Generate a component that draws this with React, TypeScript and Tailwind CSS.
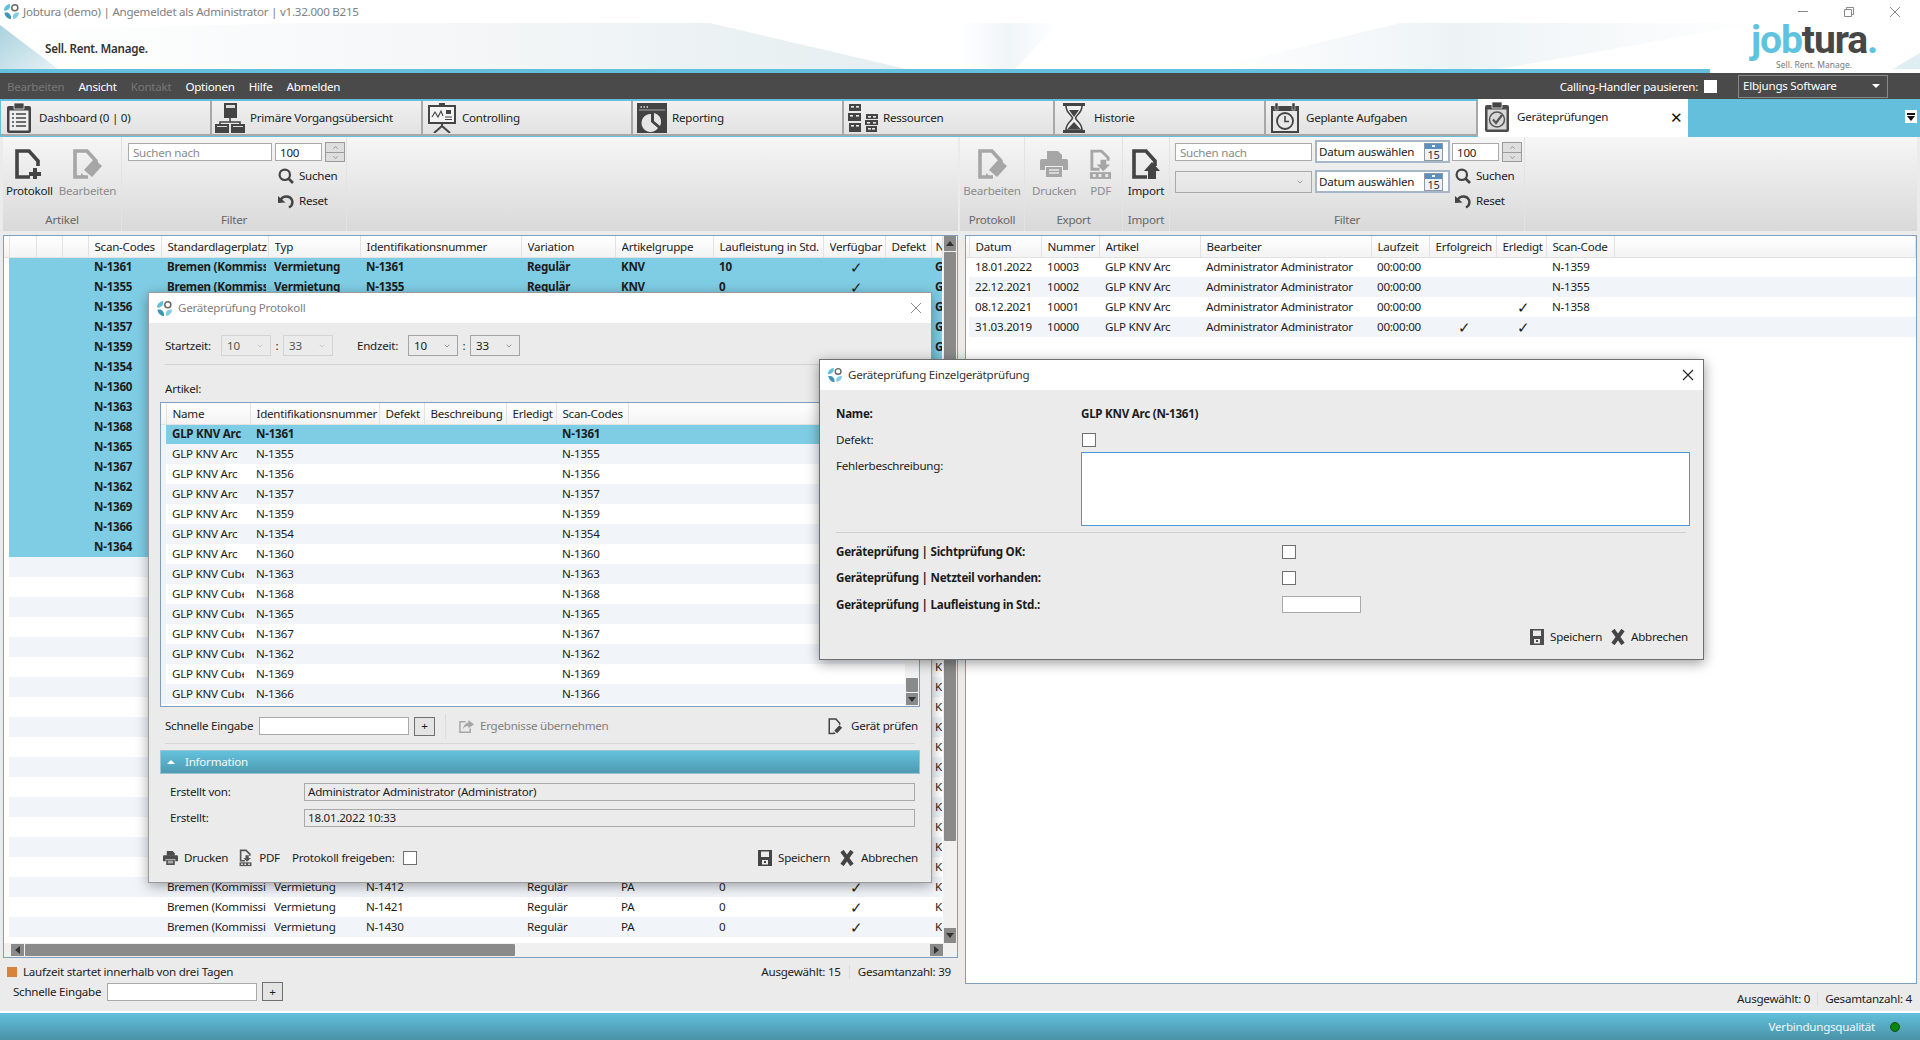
import { ChevronDown, ChevronUp } from "lucide-react"
import type { ReactNode } from "react"

const dark = "#444444"
const muted = "#a6a6a6"

function Swirl({ className = "" }: { className?: string }) {
  return (
    <svg viewBox="0 0 18 18" className={className}>
      <path d="M7.5 1 C3.5 1.5 1 4.5 1 8 C3.5 8.5 6.5 7 7.5 4.5 Z" fill="#62bfdc" />
      <path d="M1.5 10 C2 14 5 17 8.5 17 C9 14 7.5 11 4.5 10 Z" fill="#3f93b5" />
      <path d="M10.5 17 C14 16.5 16.5 14 17 10.5 C14.5 9.5 11.5 11 10.5 13.5 Z" fill="#7fcde4" />
      <circle cx="12.5" cy="5" r="3.2" fill="none" stroke="#666" strokeWidth="1.6" />
    </svg>
  )
}

function DocBase({ color, children }: { color: string; children?: ReactNode }) {
  return (
    <svg viewBox="0 0 30 30" className="w-[30px] h-[30px]">
      <path d="M16 28 H3 V2 H15 L24 12 V17" fill="none" stroke={color} strokeWidth="3.6" />
      {children}
    </svg>
  )
}

function DocPlus() {
  return (
    <DocBase color={dark}>
      <path d="M19 19 h4 v4 h4 v4 h-4 v3 h-4 v-3 h-4 v-4 h4 z" fill={dark} />
    </DocBase>
  )
}

function DocEdit({ color = muted }: { color?: string }) {
  return (
    <DocBase color={color}>
      <path d="M22 10 L30 17 L20 28 L12 21 Z" fill={color} />
      <path d="M9 24 L15 29 H9 Z" fill={color} />
    </DocBase>
  )
}

function DocImport() {
  return (
    <DocBase color={dark}>
      <path d="M21 13 L29 22 H25 V30 H17 V22 H13 Z" fill={dark} />
    </DocBase>
  )
}

function DocPdf({ small = false, color = muted, inner = "#e8e8e8" }: { small?: boolean; color?: string; inner?: string }) {
  return (
    <svg viewBox="0 0 24 32" className={small ? "w-[13px] h-[18px]" : "w-[23px] h-[31px]"}>
      <path d="M11 21 H3 V2 H13 L20 9 V12" fill="none" stroke={color} strokeWidth="3" />
      <path d="M12 11 h6 v5 h4 l-7 7 l-7 -7 h4 z" fill={color} />
      <rect x="1" y="24" width="22" height="7" fill={color} />
      <path d="M4 26 h3 v3 h-3 z M10 26 h3 v3 h-3 z M17 26 h3 v3 h-3 z" fill={inner} />
    </svg>
  )
}

function Printer({ color = muted, small = false }: { color?: string; small?: boolean }) {
  return (
    <svg viewBox="0 0 28 26" className={small ? "w-[15px] h-[14px]" : "w-[28px] h-[26px]"}>
      <path d="M7 0 H18 L22 4 V9 H7 Z" fill={color} />
      <path d="M2 8 H26 Q28 8 28 10 V19 H23 V15 H5 V19 H0 V10 Q0 8 2 8 Z" fill={color} />
      <path d="M6 16 H22 V26 H6 Z" fill={color} />
      <path d="M9 19 H19 M9 22 H19" stroke="#e6e6e6" strokeWidth="1.6" />
    </svg>
  )
}

function SearchIcon() {
  return (
    <svg viewBox="0 0 16 16" className="w-[16px] h-[16px]">
      <circle cx="6.8" cy="6.8" r="5.2" fill="none" stroke={dark} strokeWidth="2.2" />
      <path d="M10.5 10.5 L15 15" stroke={dark} strokeWidth="2.6" />
    </svg>
  )
}

function ResetIcon() {
  return (
    <svg viewBox="0 0 16 16" className="w-[16px] h-[16px]">
      <path d="M3 6.5 C5 2.5 12 2.5 14 7 C15 10 13.5 13 11 14.5" fill="none" stroke={dark} strokeWidth="2.4" />
      <path d="M0 3 L7.5 9.5 L0 10 Z" fill={dark} />
    </svg>
  )
}

function SaveIcon({ color = dark }: { color?: string }) {
  return (
    <svg viewBox="0 0 14 16" className="w-[14px] h-[16px]">
      <path fillRule="evenodd" d="M0 0 H14 V16 H0 Z M3 1.5 V7 H11 V1.5 Z M4 10 V14.5 H10 V10 Z" fill={color} />
      <rect x="6" y="11" width="2" height="2" fill={color} />
    </svg>
  )
}

function ThickX() {
  return (
    <svg viewBox="0 0 14 16" className="w-[14px] h-[16px]">
      <path d="M2 1 L12 15 M12 1 L2 15" stroke={dark} strokeWidth="4" />
    </svg>
  )
}

function CheckDocIcon() {
  return (
    <svg viewBox="0 0 18 20" className="w-[15px] h-[17px]">
      <path d="M7 18.5 H1.5 V1 H9.5 L14 6 V8" fill="none" stroke={dark} strokeWidth="1.8" />
      <path d="M13.5 8.5 L17 11.5 L11 18 L7.5 15 Z M6.5 16 L9.5 19 H6.5 Z" fill={dark} />
    </svg>
  )
}

function ShareIcon() {
  return (
    <svg viewBox="0 0 16 16" className="w-[15px] h-[15px]">
      <path d="M7 3 H1 V14 H12 V10" fill="none" stroke={muted} strokeWidth="1.6" />
      <path d="M10 1 L16 5.5 L10 10 V7.5 C7.5 7.5 5.5 8.5 4 11 C4.5 7.5 7 4.5 10 3.8 Z" fill={muted} />
    </svg>
  )
}

function ClipboardTab({ check = false }: { check?: boolean }) {
  return (
    <svg viewBox="0 0 24 30" className="w-[24px] h-[30px]">
      <path d="M2 3 H22 Q24 3 24 5 V28 Q24 30 22 30 H2 Q0 30 0 28 V5 Q0 3 2 3 Z" fill={check ? "#4a4a4a" : "#444"} />
      <path d="M7 0 H17 V6 H7 Z" fill="#444" stroke="#eee" strokeWidth="0.8" />
      {check ? (
        <>
          <rect x="2.5" y="7.5" width="19" height="20" fill="#d9d9d9" />
          <circle cx="12" cy="17.5" r="7.5" fill="none" stroke="#555" strokeWidth="1.5" />
          <path d="M8 17.5 L11 21 L17 13" fill="none" stroke="#555" strokeWidth="2.2" />
        </>
      ) : (
        <>
          <rect x="2.5" y="7.5" width="19" height="20" fill="#efefef" />
          <path d="M5 11 h2 M9 11 h10 M5 15 h2 M9 15 h10 M5 19 h2 M9 19 h10 M5 23 h2 M9 23 h10" stroke="#444" strokeWidth="1.7" />
        </>
      )}
    </svg>
  )
}

function HierarchyIcon() {
  return (
    <svg viewBox="0 0 30 30" className="w-[30px] h-[30px]">
      <rect x="9" y="0" width="13" height="15" fill={dark} />
      <rect x="11" y="2" width="9" height="3" fill="#ddd" />
      <path d="M15 15 V19 M5 23 V19 H25 V23" fill="none" stroke={dark} strokeWidth="1.6" />
      <rect x="0" y="21" width="14" height="9" fill={dark} />
      <rect x="16" y="21" width="14" height="9" fill={dark} />
      <path d="M2 23.5 h10 M18 23.5 h10" stroke="#ddd" strokeWidth="1" />
    </svg>
  )
}

function BoardIcon() {
  return (
    <svg viewBox="0 0 28 30" className="w-[28px] h-[30px]">
      <path d="M11 0 h6 v3 h-6 z" fill={dark} />
      <rect x="1" y="3" width="26" height="17" fill="#f3f3f3" stroke={dark} strokeWidth="2" />
      <path d="M4 14 L7 9 L10 14 L13 8 L15 13" fill="none" stroke={dark} strokeWidth="1.1" />
      <rect x="18" y="7" width="5" height="4" fill={dark} />
      <path d="M17 14 h7 M17 16.5 h7" stroke={dark} strokeWidth="1.2" />
      <path d="M14 20 V24 M14 23 L6 30 M14 23 L22 30" stroke={dark} strokeWidth="2" />
    </svg>
  )
}

function ReportIcon() {
  return (
    <svg viewBox="0 0 30 30" className="w-[30px] h-[30px]">
      <rect width="30" height="30" fill={dark} />
      <path d="M2 7 H28" stroke="#eee" strokeWidth="0.6" />
      <path d="M3.5 4 h1.5 M6.5 4 h1.5 M9.5 4 h1.5" stroke="#ddd" strokeWidth="1.4" />
      <path d="M14 11 A9 9 0 1 0 21 25 L14 19 Z" fill="#e6e6e6" />
      <path d="M17 10 A9 9 0 0 1 23 23 L17 18 Z" fill="#e6e6e6" />
    </svg>
  )
}

function ServerIcon() {
  const block = (x: number, y: number, w: number, h: number) => (
    <g key={`${x}-${y}`}>
      <rect x={x} y={y} width={w} height={h} fill={dark} />
      <rect x={x + w - 5} y={y + 2} width="3" height="1.6" fill="#e6e6e6" />
      <rect x={x + 2} y={y + 2} width="3" height="1.6" fill="#e6e6e6" />
    </g>
  )
  return (
    <svg viewBox="0 0 30 28" className="w-[30px] h-[28px]">
      {block(1, 0, 12, 7)}
      {block(0, 9, 13, 8)}
      {block(1, 19, 12, 9)}
      {block(18, 10, 12, 5)}
      {block(17, 16, 13, 5)}
      {block(18, 22, 11, 6)}
    </svg>
  )
}

function HourglassIcon() {
  return (
    <svg viewBox="0 0 22 30" className="w-[22px] h-[30px]">
      <path d="M0 0 H22 V3 H0 Z M0 27 H22 V30 H0 Z" fill={dark} />
      <path d="M3 3 C3 10 9 12 9.5 15 C9 18 3 20 3 27 H19 C19 20 13 18 12.5 15 C13 12 19 10 19 3" fill="#f0f0f0" stroke={dark} strokeWidth="1.6" />
      <path d="M6 7 H16 L11 14 Z M4.5 26 L11 19 L17.5 26 Z" fill={dark} />
    </svg>
  )
}

function CalendarClockIcon() {
  return (
    <svg viewBox="0 0 28 30" className="w-[28px] h-[30px]">
      <rect y="3" width="28" height="27" fill={dark} />
      <rect x="4" y="0" width="3" height="7" fill={dark} stroke="#eee" strokeWidth="0.5" />
      <rect x="21" y="0" width="3" height="7" fill={dark} stroke="#eee" strokeWidth="0.5" />
      <rect x="2" y="8" width="24" height="20" fill="#e8e8e8" />
      <circle cx="14" cy="18" r="8" fill="none" stroke={dark} strokeWidth="1.8" />
      <path d="M14 13 V18.5 H18" fill="none" stroke={dark} strokeWidth="1.6" />
    </svg>
  )
}

function CalendarIcon() {
  return (
    <div className="w-[19px] h-[18px] flex flex-col border border-[#8d9aa6] bg-[#eef1f4]">
      <div className="h-[6px] bg-[#5b8fc0] flex justify-center items-center">
        <div className="w-[3px] h-[2px] bg-white" />
      </div>
      <span className="text-[11px] leading-[11px] text-center text-[#333]">15</span>
    </div>
  )
}

function Spinner() {
  return (
    <div className="w-[20px] h-[20px] flex flex-col border border-[#9a9a9a] bg-[#dedede]">
      <div className="h-[10px] flex items-center justify-center border-b border-[#9a9a9a]">
        <ChevronUp size={7} strokeWidth={2.5} color="#777" />
      </div>
      <div className="flex-1 flex items-center justify-center">
        <ChevronDown size={7} strokeWidth={2.5} color="#777" />
      </div>
    </div>
  )
}

function TextBox({ className, text, placeholder = false }: { className: string; text?: string; placeholder?: boolean }) {
  return (
    <div className={`${className} h-[18px] bg-white border border-[#a9a9a9] px-[4px] pt-[1px] flex items-center ${placeholder ? "text-[#8a8a8a]" : ""}`}>
      {text}
    </div>
  )
}

function DateBox() {
  return (
    <div className="w-[135px] h-[23px] bg-white border-2 border-[#a6b8c8] pl-[2px] pr-[5px] flex items-center justify-between">
      <span className="mt-[1px]">Datum auswählen</span>
      <CalendarIcon />
    </div>
  )
}

function ToolButton({ icon, label, disabled = false, className = "" }: { icon: ReactNode; label: string; disabled?: boolean; className?: string }) {
  return (
    <div className={`flex flex-col items-center ${className}`}>
      <div className="h-[32px] flex items-center justify-center">{icon}</div>
      <span className={`leading-[16px] mt-[3px] ${disabled ? "text-[#8c8c8c]" : ""}`}>{label}</span>
    </div>
  )
}

function Group({ label, className, children }: { label: string; className: string; children: ReactNode }) {
  return (
    <div className={`${className} flex flex-col border-r border-[#e3e3e3]`}>
      <div className="h-[75px]">{children}</div>
      <div className="h-[16px] leading-[16px] text-center text-[#666]">{label}</div>
    </div>
  )
}

function SearchReset() {
  return (
    <div className="flex flex-col gap-[9px]">
      <div className="flex items-center gap-[5px] h-[16px]">
        <SearchIcon />
        <span>Suchen</span>
      </div>
      <div className="flex items-center gap-[5px] h-[16px]">
        <ResetIcon />
        <span>Reset</span>
      </div>
    </div>
  )
}

function Tab({ icon, label, className, iconBox }: { icon: ReactNode; label: string; className: string; iconBox: string }) {
  return (
    <div className={`${className} h-[35px] flex items-center bg-gradient-to-b from-[#f1f1f1] to-[#e2e2e2] border-r-2 border-b-2 border-[#a8a8a8]`}>
      <div className={`${iconBox} flex items-center`}>{icon}</div>
      <span className="mt-[1px]">{label}</span>
    </div>
  )
}

function VScroll() {
  return (
    <div className="w-[14px] flex flex-col bg-[#f0f0f0] px-[1px]">
      <div className="h-[15px] bg-[#8a8a8a] flex items-center justify-center">
        <div className="w-0 h-0 border-x-[4px] border-x-transparent border-b-[5px] border-b-[#333]" />
      </div>
      <div className="h-[589px] bg-[#8a8a8a] mt-[1px] rounded-[1px]" />
      <div className="flex-1" />
      <div className="h-[15px] bg-[#8a8a8a] flex items-center justify-center">
        <div className="w-0 h-0 border-x-[4px] border-x-transparent border-t-[5px] border-t-[#333]" />
      </div>
    </div>
  )
}

function HeaderCell({ label, className, edge = false }: { label?: string; className?: string; edge?: boolean }) {
  return (
    <th className={`${className ?? ""} h-[21px] p-0 font-normal text-left border-r border-b border-[#e2e2e2] bg-gradient-to-b from-white to-[#f3f3f3]`}>
      <div className={`${edge ? "ml-[4px]" : "ml-[6px]"} pt-[1px] overflow-hidden whitespace-nowrap`}>{label}</div>
    </th>
  )
}

function Cell({ children, center = false, tight = false, edge = false }: { children?: ReactNode; center?: boolean; tight?: boolean; edge?: boolean }) {
  const margins = edge ? "ml-[4px]" : tight ? "ml-[6px] mr-[6px]" : "ml-[6px] mr-[2px]"
  return (
    <td className="p-0 h-[20px]">
      <div className={`${margins} h-[16px] overflow-hidden whitespace-nowrap ${center ? "text-center" : ""}`}>{children}</div>
    </td>
  )
}

function Check() {
  return <span className="text-[15px] leading-[16px] font-normal">✓</span>
}

const blueCodes = [1361, 1355, 1356, 1357, 1359, 1354, 1360, 1363, 1368, 1365, 1367, 1362, 1369, 1366, 1364]
const otherCodes = [1401, 1402, 1403, 1404, 1405, 1406, 1407, 1408, 1409, 1410, 1411, 1413, 1414, 1415, 1416, 1417, 1412, 1421, 1430]

const leftCols = [
  { w: "w-[5px]" },
  { w: "w-[27px]" },
  { w: "w-[26px]" },
  { w: "w-[26px]" },
  { w: "w-[73px]", label: "Scan-Codes" },
  { w: "w-[107px]", label: "Standardlagerplatz" },
  { w: "w-[92px]", label: "Typ" },
  { w: "w-[161px]", label: "Identifikationsnummer" },
  { w: "w-[94px]", label: "Variation" },
  { w: "w-[98px]", label: "Artikelgruppe" },
  { w: "w-[110px]", label: "Laufleistung in Std." },
  { w: "w-[62px]", label: "Verfügbar" },
  { w: "w-[46px]", label: "Defekt" },
  { w: "w-[11px]", label: "N" },
]

function LeftTable() {
  return (
    <div className="h-[723px] flex flex-col border border-[#7f9fbc] bg-white">
      <div className="flex-1 flex min-h-0">
        <div className="flex-1 overflow-hidden">
          <table className="table-fixed w-[938px] border-collapse">
            <thead>
              <tr>
                {leftCols.map((c, i) => (
                  <HeaderCell key={i} className={c.w} label={c.label} edge={i === leftCols.length - 1} />
                ))}
              </tr>
            </thead>
            <tbody>
              {blueCodes.map((c, i) => (
                <tr key={c} className="bg-[#7fcde4] font-bold">
                  <td className="p-0 bg-white" />
                  <Cell />
                  <Cell />
                  <Cell />
                  <Cell>N-{c}</Cell>
                  <Cell>Bremen (Kommissionierung)</Cell>
                  <Cell>Vermietung</Cell>
                  <Cell>N-{c}</Cell>
                  <Cell>Regulär</Cell>
                  <Cell>KNV</Cell>
                  <Cell>{i === 0 ? 10 : 0}</Cell>
                  <Cell center><Check /></Cell>
                  <Cell />
                  <Cell edge>G</Cell>
                </tr>
              ))}
              {otherCodes.map((c, i) => (
                <tr key={c} className={(i + 15) % 2 === 1 ? "bg-[#f1f5fa]" : "bg-white"}>
                  <td className="p-0 bg-white" />
                  <Cell />
                  <Cell />
                  <Cell />
                  <Cell />
                  <Cell>Bremen (Kommissionierung)</Cell>
                  <Cell>Vermietung</Cell>
                  <Cell>N-{c}</Cell>
                  <Cell>Regulär</Cell>
                  <Cell>PA</Cell>
                  <Cell>0</Cell>
                  <Cell center><Check /></Cell>
                  <Cell />
                  <Cell edge>K</Cell>
                </tr>
              ))}
            </tbody>
          </table>
        </div>
        <VScroll />
      </div>
      <div className="h-[14px] flex bg-[#f0f0f0] pl-[7px] pr-[14px] py-[1px]">
        <div className="w-[13px] bg-[#8a8a8a] flex items-center justify-center">
          <div className="w-0 h-0 border-y-[4px] border-y-transparent border-r-[5px] border-r-[#333]" />
        </div>
        <div className="w-[490px] ml-[1px] bg-[#8a8a8a] rounded-[1px]" />
        <div className="flex-1" />
        <div className="w-[13px] bg-[#8a8a8a] flex items-center justify-center">
          <div className="w-0 h-0 border-y-[4px] border-y-transparent border-l-[5px] border-l-[#333]" />
        </div>
      </div>
    </div>
  )
}

const rightCols = [
  { w: "w-[3px]" },
  { w: "w-[72px]", label: "Datum" },
  { w: "w-[58px]", label: "Nummer" },
  { w: "w-[101px]", label: "Artikel" },
  { w: "w-[171px]", label: "Bearbeiter" },
  { w: "w-[58px]", label: "Laufzeit" },
  { w: "w-[67px]", label: "Erfolgreich" },
  { w: "w-[50px]", label: "Erledigt" },
  { w: "w-[68px]", label: "Scan-Code" },
  { w: "" },
]

const rightRows = [
  { date: "18.01.2022", nr: 10003, ok: false, done: false, code: "N-1359" },
  { date: "22.12.2021", nr: 10002, ok: false, done: false, code: "N-1355" },
  { date: "08.12.2021", nr: 10001, ok: false, done: true, code: "N-1358" },
  { date: "31.03.2019", nr: 10000, ok: true, done: true, code: "" },
]

function RightTable() {
  return (
    <div className="h-[749px] ml-[5px] border border-[#7f9fbc] bg-white overflow-hidden">
      <table className="table-fixed w-full border-collapse">
        <thead>
          <tr>
            {rightCols.map((c, i) => (
              <HeaderCell key={i} className={c.w} label={c.label} />
            ))}
          </tr>
        </thead>
        <tbody>
          {rightRows.map((r, i) => (
            <tr key={r.nr} className={i % 2 === 1 ? "bg-[#f1f5fa]" : "bg-white"}>
              <td className="p-0 bg-white" />
              <Cell>{r.date}</Cell>
              <Cell>{r.nr}</Cell>
              <Cell>GLP KNV Arc</Cell>
              <Cell>Administrator Administrator</Cell>
              <Cell>00:00:00</Cell>
              <Cell center>{r.ok ? <Check /> : null}</Cell>
              <Cell center>{r.done ? <Check /> : null}</Cell>
              <Cell>{r.code}</Cell>
              <Cell />
            </tr>
          ))}
        </tbody>
      </table>
    </div>
  )
}

const dialogRows = [
  ["GLP KNV Arc", "N-1361"],
  ["GLP KNV Arc", "N-1355"],
  ["GLP KNV Arc", "N-1356"],
  ["GLP KNV Arc", "N-1357"],
  ["GLP KNV Arc", "N-1359"],
  ["GLP KNV Arc", "N-1354"],
  ["GLP KNV Arc", "N-1360"],
  ["GLP KNV Cube", "N-1363"],
  ["GLP KNV Cube", "N-1368"],
  ["GLP KNV Cube", "N-1365"],
  ["GLP KNV Cube", "N-1367"],
  ["GLP KNV Cube", "N-1362"],
  ["GLP KNV Cube", "N-1369"],
  ["GLP KNV Cube", "N-1366"],
]

const dialogCols = [
  { w: "w-[5px]" },
  { w: "w-[84px]", label: "Name" },
  { w: "w-[129px]", label: "Identifikationsnummer" },
  { w: "w-[45px]", label: "Defekt" },
  { w: "w-[82px]", label: "Beschreibung" },
  { w: "w-[50px]", label: "Erledigt" },
  { w: "w-[72px]", label: "Scan-Codes" },
  { w: "" },
]

function TimeSelect({ value, disabled = false }: { value: string; disabled?: boolean }) {
  return (
    <div className={`w-[50px] h-[21px] border pl-[5px] pr-[6px] flex items-center justify-between ${disabled ? "border-[#d4d4d4] text-[#555]" : "border-[#a4a4a4]"}`}>
      <span>{value}</span>
      <ChevronDown size={8} strokeWidth={2} color={disabled ? "#b5b5b5" : "#666"} />
    </div>
  )
}

function ProtocolDialog() {
  return (
    <div className="absolute left-[148px] top-[292px] w-[784px] h-[591px] flex flex-col border border-[#9a9a9a] bg-[#ebebeb] shadow-[0_3px_12px_rgba(0,0,0,0.35)]">
      <div className="h-[30px] shrink-0 bg-white flex items-center pl-[7px] pr-[9px] text-[#808080]">
        <Swirl className="w-[17px] h-[17px] mr-[5px]" />
        <span>Geräteprüfung Protokoll</span>
        <svg viewBox="0 0 12 12" className="w-[12px] h-[12px] ml-auto">
          <path d="M1 1 L11 11 M11 1 L1 11" stroke="#8a8a8a" strokeWidth="1" />
        </svg>
      </div>
      <div className="flex-1 flex flex-col px-[11px]">
        <div className="mt-[12px] h-[21px] pl-[5px] flex items-center">
          <span className="w-[56px]">Startzeit:</span>
          <TimeSelect value="10" disabled />
          <span className="w-[12px] text-center">:</span>
          <TimeSelect value="33" disabled />
          <span className="ml-[24px] w-[51px]">Endzeit:</span>
          <TimeSelect value="10" />
          <span className="w-[12px] text-center">:</span>
          <TimeSelect value="33" />
        </div>
        <div className="mt-[8px] ml-[5px] mr-[5px] h-[1px] bg-[#d2d2d2]" />
        <div className="mt-[16px] h-[16px] leading-[16px] pl-[5px]">Artikel:</div>
        <div className="mt-[5px] h-[305px] flex border border-[#7f9fbc] bg-white">
          <div className="flex-1 overflow-hidden">
            <table className="table-fixed w-full border-collapse">
              <thead>
                <tr>
                  {dialogCols.map((c, i) => (
                    <HeaderCell key={i} className={c.w} label={c.label} />
                  ))}
                </tr>
              </thead>
              <tbody>
                {dialogRows.map(([name, code], i) => (
                  <tr key={code} className={i === 0 ? "bg-[#7fcde4] font-bold" : i % 2 === 1 ? "bg-[#f1f5fa]" : "bg-white"}>
                    <td className="p-0 bg-[#eef3f8]" />
                    <Cell tight>{name}</Cell>
                    <Cell>{code}</Cell>
                    <Cell />
                    <Cell />
                    <Cell />
                    <Cell>{code}</Cell>
                    <Cell />
                  </tr>
                ))}
              </tbody>
            </table>
          </div>
          <div className="w-[14px] flex flex-col justify-end bg-[#f3f3f3] px-[1px] pb-[1px]">
            <div className="h-[14px] bg-[#8a8a8a] rounded-[1px]" />
            <div className="h-[12px] mt-[1px] bg-[#8a8a8a] flex items-center justify-center">
              <div className="w-0 h-0 border-x-[4px] border-x-transparent border-t-[5px] border-t-[#333]" />
            </div>
          </div>
        </div>
        <div className="mt-[9px] h-[20px] pl-[5px] flex items-center">
          <span className="w-[94px]">Schnelle Eingabe</span>
          <div className="w-[150px] h-[18px] bg-white border border-[#a9a9a9]" />
          <div className="ml-[5px] w-[21px] h-[19px] bg-[#e4e4e4] border border-[#707070] flex items-center justify-center leading-none">+</div>
          <div className="ml-[10px] w-[1px] h-[25px] bg-[#dcdcdc]" />
          <div className="ml-[13px]"><ShareIcon /></div>
          <span className="ml-[6px] text-[#808080]">Ergebnisse übernehmen</span>
          <div className="ml-auto mr-[2px] flex items-center gap-[8px]">
            <CheckDocIcon />
            <span>Gerät prüfen</span>
          </div>
        </div>
        <div className="mt-[7px] mx-[5px] h-[1px] bg-[#d6d6d6]" />
        <div className="mt-[6px] h-[24px] shrink-0 flex items-center text-[#f3f8fa] bg-gradient-to-b from-[#64c2dc] to-[#4d9ab1] border border-[#9ac4d2]">
          <div className="ml-[6px] w-0 h-0 border-x-[4px] border-x-transparent border-b-[4px] border-b-white" />
          <span className="ml-[10px]">Information</span>
        </div>
        <div className="mt-[9px] h-[18px] pl-[10px] pr-[5px] flex items-center">
          <span className="w-[134px]">Erstellt von:</span>
          <div className="flex-1 h-[18px] px-[3px] border border-[#a9a9a9] flex items-center">Administrator Administrator (Administrator)</div>
        </div>
        <div className="mt-[8px] h-[18px] pl-[10px] pr-[5px] flex items-center">
          <span className="w-[134px]">Erstellt:</span>
          <div className="flex-1 h-[18px] px-[3px] border border-[#a9a9a9] flex items-center">18.01.2022 10:33</div>
        </div>
        <div className="mt-[21px] h-[20px] pl-[3px] pr-[2px] flex items-center">
          <Printer color="#4d4d4d" small />
          <span className="ml-[6px]">Drucken</span>
          <div className="ml-[11px]"><DocPdf small color="#555555" inner="#ebebeb" /></div>
          <span className="ml-[7px]">PDF</span>
          <span className="ml-[12px]">Protokoll freigeben:</span>
          <div className="ml-[8px] w-[14px] h-[14px] bg-white border border-[#707070]" />
          <div className="ml-auto flex items-center">
            <SaveIcon />
            <span className="ml-[6px]">Speichern</span>
            <div className="ml-[10px]"><ThickX /></div>
            <span className="ml-[7px]">Abbrechen</span>
          </div>
        </div>
      </div>
    </div>
  )
}

function SingleCheckDialog() {
  return (
    <div className="absolute left-[819px] top-[359px] w-[885px] h-[301px] flex flex-col border border-[#6f6f6f] bg-[#ebebeb] shadow-[0_3px_12px_rgba(0,0,0,0.4)]">
      <div className="h-[30px] shrink-0 bg-white flex items-center pl-[7px] pr-[9px] text-[#333]">
        <Swirl className="w-[16px] h-[16px] mr-[5px]" />
        <span>Geräteprüfung Einzelgerätprüfung</span>
        <svg viewBox="0 0 12 12" className="w-[12px] h-[12px] ml-auto">
          <path d="M1 1 L11 11 M11 1 L1 11" stroke="#222" strokeWidth="1.1" />
        </svg>
      </div>
      <div className="flex-1 flex flex-col pl-[16px] pr-[13px]">
        <div className="mt-[16px] h-[16px] leading-[16px] flex font-bold">
          <span className="w-[245px]">Name:</span>
          <span>GLP KNV Arc (N-1361)</span>
        </div>
        <div className="mt-[10px] h-[16px] leading-[16px] flex items-center">
          <span className="w-[245px]">Defekt:</span>
          <div className="ml-[1px] w-[14px] h-[14px] bg-white border border-[#707070]" />
        </div>
        <div className="mt-[4px] flex">
          <span className="w-[245px] mt-[6px] leading-[16px]">Fehlerbeschreibung:</span>
          <div className="flex-1 h-[74px] bg-white border border-[#4a98e0]" />
        </div>
        <div className="mt-[6px] mr-[4px] h-[1px] bg-[#cfcfcf]" />
        <div className="mt-[11px] grid grid-cols-[446px_1fr] gap-y-[10px] font-bold items-center">
          <span className="leading-[16px]">Geräteprüfung | Sichtprüfung OK:</span>
          <div className="w-[14px] h-[14px] bg-white border border-[#707070]" />
          <span className="leading-[16px]">Geräteprüfung | Netzteil vorhanden:</span>
          <div className="w-[14px] h-[14px] bg-white border border-[#707070]" />
          <span className="leading-[16px]">Geräteprüfung | Laufleistung in Std.:</span>
          <div className="w-[79px] h-[17px] bg-white border border-[#a9a9a9]" />
        </div>
        <div className="mt-[15px] h-[18px] pr-[2px] flex items-center justify-end">
          <SaveIcon color="#4d4d4d" />
          <span className="ml-[6px]">Speichern</span>
          <div className="ml-[9px]"><ThickX /></div>
          <span className="ml-[6px]">Abbrechen</span>
        </div>
      </div>
    </div>
  )
}

function HeaderArt() {
  return (
    <svg viewBox="0 0 1920 69" preserveAspectRatio="none" className="absolute inset-0 w-full h-full">
      <defs>
        <linearGradient id="band1" x1="0" x2="1" y1="0" y2="0">
          <stop offset="0" stopColor="#ffffff" />
          <stop offset="0.6" stopColor="#f2f5f6" />
          <stop offset="1" stopColor="#e4eef1" />
        </linearGradient>
        <linearGradient id="band2" x1="0" x2="1" y1="0" y2="0">
          <stop offset="0" stopColor="#ffffff" />
          <stop offset="0.5" stopColor="#f0f5f7" />
          <stop offset="1" stopColor="#ffffff" />
        </linearGradient>
        <linearGradient id="band3" x1="0" x2="1" y1="0" y2="0">
          <stop offset="0" stopColor="#ffffff" />
          <stop offset="0.45" stopColor="#edf3f5" />
          <stop offset="1" stopColor="#ffffff" />
        </linearGradient>
        <linearGradient id="corner" x1="0" x2="1" y1="0" y2="1">
          <stop offset="0" stopColor="#a9d2de" />
          <stop offset="1" stopColor="#e6f1f4" />
        </linearGradient>
      </defs>
      <path d="M0 30 L300 23 H710 L906 69 H60 Z" fill="url(#band1)" />
      <path d="M960 23 H1058 L1015 69 H960 Z" fill="url(#band2)" />
      <path d="M1400 23 H1760 L1500 69 H1210 Z" fill="url(#band3)" />
      <path d="M0 25 L58 69 H0 Z" fill="url(#corner)" />
      <path d="M1920 53 V69 H1893 Z" fill="#dfeef3" />
    </svg>
  )
}

export default function App() {
  return (
    <div className="relative w-[1920px] h-[1040px] overflow-hidden flex flex-col bg-[#ebebeb] text-[11.6px] leading-[16px] tracking-[-0.25px] text-[#1c1c1c] [font-family:'Noto_Sans',sans-serif]">
      <div className="relative h-[69px] shrink-0 bg-white">
        <HeaderArt />
        <div className="relative h-[23px] flex items-center pl-[3px] text-[#808080]">
          <Swirl className="w-[17px] h-[17px] mr-[3px]" />
          <span>Jobtura (demo) | Angemeldet als Administrator | v1.32.000 B215</span>
          <div className="ml-auto flex items-center gap-[36px] pr-[20px]">
            <div className="w-[10px] h-[1px] bg-[#888]" />
            <svg viewBox="0 0 10 10" className="w-[10px] h-[10px]">
              <path d="M0.5 2.5 H7.5 V9.5 H0.5 Z M2.5 2.5 V0.5 H9.5 V7.5 H7.5" fill="none" stroke="#888" strokeWidth="1" />
            </svg>
            <svg viewBox="0 0 10 10" className="w-[10px] h-[10px]">
              <path d="M0 0 L10 10 M10 0 L0 10" stroke="#888" strokeWidth="1" />
            </svg>
          </div>
        </div>
        <div className="relative pl-[45px] mt-[18px] font-semibold text-[#333]">Sell. Rent. Manage.</div>
        <div className="absolute left-[1751px] top-[18px] flex flex-col items-center">
          <div className="text-[39px] leading-[44px] font-bold tracking-[-1.1px] [font-family:'Roboto',sans-serif]">
            <span className="text-[#5fc3e0]">job</span>
            <span className="text-[#474747]">tura</span>
            <span className="text-[#5fc3e0]">.</span>
          </div>
          <div className="text-[8.5px] leading-[9px] -mt-[2px] tracking-normal text-[#777]">Sell. Rent. Manage.</div>
        </div>
      </div>
      <div className="h-[4px] shrink-0 bg-white">
        <div className="h-full w-[1710px] bg-[#64bfdc]" />
      </div>
      <div className="h-[26px] shrink-0 bg-[#4a4a4a] flex items-center pl-[7px] pr-[32px] text-white">
        <div className="flex gap-[14px] pt-[1px]">
          <span className="text-[#777]">Bearbeiten</span>
          <span>Ansicht</span>
          <span className="text-[#777]">Kontakt</span>
          <span>Optionen</span>
          <span>Hilfe</span>
          <span>Abmelden</span>
        </div>
        <span className="ml-auto pt-[1px]">Calling-Handler pausieren:</span>
        <div className="ml-[6px] w-[13px] h-[13px] bg-white" />
        <div className="ml-[21px] w-[150px] h-[23px] border border-[#888] pl-[4px] pr-[7px] flex items-center justify-between">
          <span>Elbjungs Software</span>
          <div className="w-0 h-0 border-x-[4px] border-x-transparent border-t-[4px] border-t-white" />
        </div>
      </div>
      <div className="h-[38px] shrink-0 bg-[#64bfdc] flex pt-[2px] relative">
        <Tab className="w-[211px] ml-[1px]" iconBox="pl-[6px] w-[38px]" icon={<ClipboardTab />} label="Dashboard (0 | 0)" />
        <Tab className="w-[211px]" iconBox="pl-[3px] w-[38px]" icon={<HierarchyIcon />} label="Primäre Vorgangsübersicht" />
        <Tab className="w-[210px]" iconBox="pl-[5px] w-[39px]" icon={<BoardIcon />} label="Controlling" />
        <Tab className="w-[211px]" iconBox="pl-[4px] w-[39px]" icon={<ReportIcon />} label="Reporting" />
        <Tab className="w-[211px]" iconBox="pl-[4px] w-[39px]" icon={<ServerIcon />} label="Ressourcen" />
        <Tab className="w-[211px]" iconBox="pl-[8px] w-[39px]" icon={<HourglassIcon />} label="Historie" />
        <Tab className="w-[212px]" iconBox="pl-[5px] w-[40px]" icon={<CalendarClockIcon />} label="Geplante Aufgaben" />
        <div className="w-[210px] h-[38px] -mt-[2px] bg-white flex items-center pl-[7px] pb-[2px]">
          <ClipboardTab check />
          <span className="ml-[8px]">Geräteprüfungen</span>
          <span className="ml-auto mr-[5px] text-[15px] text-[#111]">✕</span>
        </div>
        <div className="absolute right-[3px] top-[11px] w-[12px] h-[13px] bg-white flex flex-col items-center justify-center gap-[1px]">
          <div className="w-[8px] h-[2px] bg-[#111]" />
          <div className="w-0 h-0 border-x-[4px] border-x-transparent border-t-[5px] border-t-[#111]" />
        </div>
      </div>
      <div className="flex-1 flex min-h-0 pl-[3px] pr-[3px] gap-[2px]">
        <div className="w-[955px] flex flex-col">
          <div className="h-[94px] flex bg-gradient-to-b from-[#f6f6f6] to-[#d9d9d9]">
            <Group label="Artikel" className="w-[119px]">
              <div className="flex pt-[11px] pl-[3px] gap-[6px]">
                <ToolButton icon={<DocPlus />} label="Protokoll" />
                <ToolButton icon={<DocEdit />} label="Bearbeiten" disabled />
              </div>
            </Group>
            <Group label="Filter" className="w-[225px]">
              <div className="flex pt-[5px] pl-[6px]">
                <TextBox className="w-[144px] mt-[1px]" text="Suchen nach" placeholder />
                <div className="flex flex-col ml-[3px]">
                  <div className="flex items-start gap-[3px]">
                    <TextBox className="w-[47px] mt-[1px]" text="100" />
                    <Spinner />
                  </div>
                  <div className="mt-[6px] pl-[3px]">
                    <SearchReset />
                  </div>
                </div>
              </div>
            </Group>
          </div>
          <div className="mt-[4px]">
            <LeftTable />
          </div>
          <div className="pl-[4px] pr-[7px] mt-[6px] flex items-center h-[16px]">
            <div className="w-[10px] h-[10px] bg-[#d8823c]" />
            <span className="ml-[6px]">Laufzeit startet innerhalb von drei Tagen</span>
            <span className="ml-auto">Ausgewählt: 15</span>
            <div className="mx-[8px] w-[1px] h-[14px] bg-[#dcdcdc]" />
            <span>Gesamtanzahl: 39</span>
          </div>
          <div className="mt-[2px] pl-[10px] flex items-center h-[19px]">
            <span className="w-[94px] pt-[1px]">Schnelle Eingabe</span>
            <div className="w-[150px] h-[18px] bg-white border border-[#a9a9a9]" />
            <div className="ml-[5px] w-[21px] h-[19px] bg-[#e4e4e4] border border-[#707070] flex items-center justify-center leading-none">+</div>
          </div>
        </div>
        <div className="flex-1 flex flex-col min-w-0">
          <div className="h-[94px] flex bg-gradient-to-b from-[#f6f6f6] to-[#d9d9d9]">
            <Group label="Protokoll" className="w-[65px]">
              <div className="flex justify-center pt-[11px]">
                <ToolButton icon={<DocEdit />} label="Bearbeiten" disabled />
              </div>
            </Group>
            <Group label="Export" className="w-[98px]">
              <div className="flex pl-[7px] gap-[13px] pt-[11px]">
                <ToolButton icon={<Printer />} label="Drucken" disabled />
                <ToolButton icon={<DocPdf />} label="PDF" disabled />
              </div>
            </Group>
            <Group label="Import" className="w-[47px]">
              <div className="flex justify-center pt-[11px]">
                <ToolButton icon={<DocImport />} label="Import" />
              </div>
            </Group>
            <Group label="Filter" className="w-[355px]">
              <div className="flex pl-[5px] pt-[3px]">
                <div className="flex flex-col w-[137px]">
                  <TextBox className="w-full mt-[3px]" text="Suchen nach" placeholder />
                  <div className="mt-[10px] h-[22px] border border-[#a9a9a9] pr-[7px] flex items-center justify-end">
                    <ChevronDown size={8} strokeWidth={2} color="#777" />
                  </div>
                </div>
                <div className="ml-[3px] flex flex-col gap-[7px]">
                  <DateBox />
                  <DateBox />
                </div>
                <div className="flex flex-col ml-[2px]">
                  <div className="flex items-start gap-[3px] pt-[2px]">
                    <TextBox className="w-[47px] mt-[1px]" text="100" />
                    <Spinner />
                  </div>
                  <div className="mt-[6px] pl-[3px]">
                    <SearchReset />
                  </div>
                </div>
              </div>
            </Group>
          </div>
          <div className="mt-[4px]">
            <RightTable />
          </div>
          <div className="mt-[7px] pr-[5px] h-[16px] flex items-center justify-end">
            <span>Ausgewählt: 0</span>
            <div className="mx-[7px] w-[1px] h-[14px] bg-[#dcdcdc]" />
            <span>Gesamtanzahl: 4</span>
          </div>
        </div>
      </div>
      <div className="h-[29px] shrink-0 border-t-2 border-white bg-gradient-to-b from-[#62c0db] to-[#4a92a8] flex items-center justify-end pr-[20px] text-[#eef7fa]">
        <span>Verbindungsqualität</span>
        <div className="ml-[15px] w-[10px] h-[10px] rounded-full bg-[#0a870a] border border-[#155015]" />
      </div>
      <ProtocolDialog />
      <SingleCheckDialog />
    </div>
  )
}
